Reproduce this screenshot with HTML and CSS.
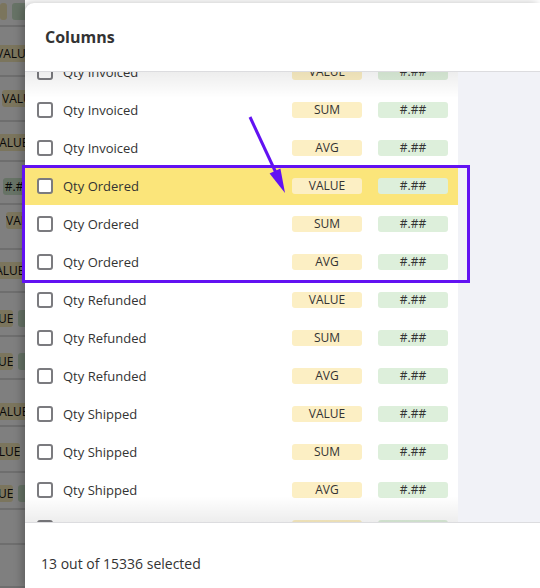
FILE: index.html
```html
<!DOCTYPE html>
<html>
<head>
<meta charset="utf-8">
<link rel="stylesheet" href="styles.css">
</head>
<body>
<div class="page">
  <div class="backdrop">
    <div class="bgrow h27"><span class="bb y o w7 l0">VALUE</span><span class="bb y g l12"></span></div>
    <div class="bgrow h50"><span class="bb o t18 lm4">VALUE</span></div>
    <div class="bgrow h45"><span class="bb o t13 l2">VALUE</span></div>
    <div class="bgrow h40"><span class="bb o t12 lm8">VALUE</span></div>
    <div class="bgrow h43"><span class="bb g t16 l3">#.##</span></div>
    <div class="bgrow h45"><span class="bb o t7 l6">VALUE</span></div>
    <div class="bgrow h43"><span class="bb o t12 lm12">VALUE</span></div>
    <div class="bgrow h44"><span class="bb o t17 lm40">VALUE</span><span class="bb g t17 l19"></span></div>
    <div class="bgrow h43"><span class="bb o t16 lm40">VALUE</span><span class="bb g t16 l17"></span></div>
    <div class="bgrow h47"><span class="bb o t23 lm8">VALUE</span></div>
    <div class="bgrow h46"><span class="bb o t16 lm16">VALUE</span></div>
    <div class="bgrow h37"><span class="bb o t12 lm40">VALUE</span><span class="bb g t12 l19"></span></div>
    <div class="bgrow h35"></div>
    <div class="bgrow h43"></div>
  </div>

  <div class="modal">
    <div class="modal-header">Columns</div>
    <div class="modal-body">
      <div class="list">
        <div class="list-inner">
          <div class="row"><span class="cb"></span><span class="label">Qty Invoiced</span><span class="badge agg">VALUE</span><span class="badge fmt">#.##</span></div>
          <div class="row"><span class="cb"></span><span class="label">Qty Invoiced</span><span class="badge agg">SUM</span><span class="badge fmt">#.##</span></div>
          <div class="row"><span class="cb"></span><span class="label">Qty Invoiced</span><span class="badge agg">AVG</span><span class="badge fmt">#.##</span></div>
          <div class="row active"><span class="cb"></span><span class="label">Qty Ordered</span><span class="badge agg">VALUE</span><span class="badge fmt">#.##</span></div>
          <div class="row"><span class="cb"></span><span class="label">Qty Ordered</span><span class="badge agg">SUM</span><span class="badge fmt">#.##</span></div>
          <div class="row"><span class="cb"></span><span class="label">Qty Ordered</span><span class="badge agg">AVG</span><span class="badge fmt">#.##</span></div>
          <div class="row"><span class="cb"></span><span class="label">Qty Refunded</span><span class="badge agg">VALUE</span><span class="badge fmt">#.##</span></div>
          <div class="row"><span class="cb"></span><span class="label">Qty Refunded</span><span class="badge agg">SUM</span><span class="badge fmt">#.##</span></div>
          <div class="row"><span class="cb"></span><span class="label">Qty Refunded</span><span class="badge agg">AVG</span><span class="badge fmt">#.##</span></div>
          <div class="row"><span class="cb"></span><span class="label">Qty Shipped</span><span class="badge agg">VALUE</span><span class="badge fmt">#.##</span></div>
          <div class="row"><span class="cb"></span><span class="label">Qty Shipped</span><span class="badge agg">SUM</span><span class="badge fmt">#.##</span></div>
          <div class="row"><span class="cb"></span><span class="label">Qty Shipped</span><span class="badge agg">AVG</span><span class="badge fmt">#.##</span></div>
          <div class="row"><span class="cb"></span><span class="label">Row Total</span><span class="badge agg">VALUE</span><span class="badge fmt">#.##</span></div>
        </div>
      </div>
      <div class="side"></div>
    </div>
    <div class="modal-footer">13 out of 15336 selected</div>
  </div>

  <svg class="annotation" width="540" height="588" viewBox="0 0 540 588">
    <rect x="23.5" y="166.5" width="445" height="115" fill="none" stroke="#6212f2" stroke-width="3"/>
    <line x1="250" y1="117" x2="277" y2="175" stroke="#6212f2" stroke-width="3"/>
    <polygon points="285,193 269.6,173.5 280.4,168.5" fill="#6212f2"/>
  </svg>
</div>
</body>
</html>
```

FILE: styles.css
```css
html, body {
  margin: 0;
  padding: 0;
}
body {
  width: 540px;
  height: 588px;
  overflow: hidden;
  font-family: "Open Sans", "Noto Sans", sans-serif;
  color: #333;
}
.page {
  position: relative;
  width: 540px;
  height: 588px;
  display: flex;
  overflow: hidden;
}
.backdrop {
  position: relative;
  width: 25px;
  flex: none;
  background: #fff;
  display: flex;
  flex-direction: column;
  overflow: hidden;
}
.backdrop::after {
  content: "";
  position: absolute;
  inset: 0;
  background: rgba(0, 0, 0, 0.5);
}
.bgrow {
  flex: none;
  box-sizing: border-box;
  border-bottom: 2px solid #ddd;
  position: relative;
  display: flex;
  align-items: flex-start;
  gap: 5px;
}
.h27 { height: 27px; }
.h35 { height: 35px; }
.h37 { height: 37px; }
.h40 { height: 40px; }
.h43 { height: 43px; }
.h44 { height: 44px; }
.h45 { height: 45px; }
.h46 { height: 46px; }
.h47 { height: 47px; }
.h50 { height: 50px; }
.bb {
  flex: none;
  display: block;
  height: 17px;
  line-height: 17px;
  width: 36px;
  border-radius: 3px;
  font-size: 12px;
  text-align: center;
  color: #111;
  white-space: nowrap;
  overflow: hidden;
}
.bb.o { background: #f7eaba; }
.bb.g { background: #cfe6cc; width: 30px; }
.bb.y { margin-top: 3px; }
.bb.w7 { width: 7px; color: transparent; }
.t7 { margin-top: 7px; }
.t12 { margin-top: 12px; }
.t13 { margin-top: 13px; }
.t16 { margin-top: 16px; }
.t17 { margin-top: 17px; }
.t18 { margin-top: 18px; }
.t23 { margin-top: 23px; }
.l0 { margin-left: 0; }
.l2 { margin-left: 2px; }
.l3 { margin-left: 3px; }
.l6 { margin-left: 6px; }
.l12 { margin-left: 0; }
.l17 { margin-left: 0; }
.l19 { margin-left: 0; }
.lm4 { margin-left: -4px; }
.lm8 { margin-left: -8px; }
.lm12 { margin-left: -12px; }
.lm16 { margin-left: -16px; }
.lm40 { margin-left: -23px; }

.modal {
  flex: 1;
  margin-top: 3px;
  background: #fff;
  border-top-left-radius: 9px;
  display: flex;
  flex-direction: column;
  box-shadow: -3px 0 8px rgba(0, 0, 0, 0.25);
  position: relative;
  z-index: 1;
}
.modal-header {
  height: 69px;
  flex: none;
  box-sizing: border-box;
  border-bottom: 1px solid #dcdcdf;
  padding-left: 20px;
  display: flex;
  align-items: center;
  font-size: 16px;
  font-weight: 700;
  color: #333;
  padding-bottom: 1px;
}
.modal-body {
  height: 450px;
  flex: none;
  display: flex;
  overflow: hidden;
}
.list {
  width: 433px;
  flex: none;
  position: relative;
  overflow: hidden;
  background: #fff;
}
.list::before,
.list::after {
  content: "";
  position: absolute;
  left: 0;
  right: 0;
  height: 26px;
  z-index: 2;
  pointer-events: none;
}
.list::before {
  top: 0;
  background: linear-gradient(to bottom, rgba(0, 0, 0, 0.07), rgba(0, 0, 0, 0));
}
.list::after {
  bottom: 0;
  background: linear-gradient(to top, rgba(0, 0, 0, 0.07), rgba(0, 0, 0, 0));
}
.list-inner {
  margin-top: -19px;
}
.row {
  height: 38px;
  box-sizing: border-box;
  display: flex;
  align-items: center;
  padding: 0 10px 0 12px;
}
.row.active {
  background: #fbe57a;
}
.cb {
  width: 16px;
  height: 16px;
  box-sizing: border-box;
  border: 2px solid #7b7b7f;
  border-radius: 3px;
  background: #fff;
  flex: none;
  margin-right: 10px;
}
.label {
  flex: 1;
  font-size: 13px;
  color: #333;
  white-space: nowrap;
}
.badge {
  flex: none;
  width: 70px;
  height: 16px;
  line-height: 16px;
  border-radius: 3px;
  font-size: 12px;
  text-align: center;
  color: #333;
}
.badge.agg {
  background: #fcefc4;
  margin-right: 16px;
}
.badge.fmt {
  background: #ddefdb;
}
.side {
  flex: 1;
  background: #f1f2f7;
}
.modal-footer {
  flex: 1;
  box-sizing: border-box;
  border-top: 1px solid #dcdcdf;
  padding-left: 16px;
  display: flex;
  align-items: center;
  font-size: 14px;
  color: #333;
  padding-top: 16px;
}
.annotation {
  position: absolute;
  left: 0;
  top: 0;
  z-index: 5;
  pointer-events: none;
}
```
